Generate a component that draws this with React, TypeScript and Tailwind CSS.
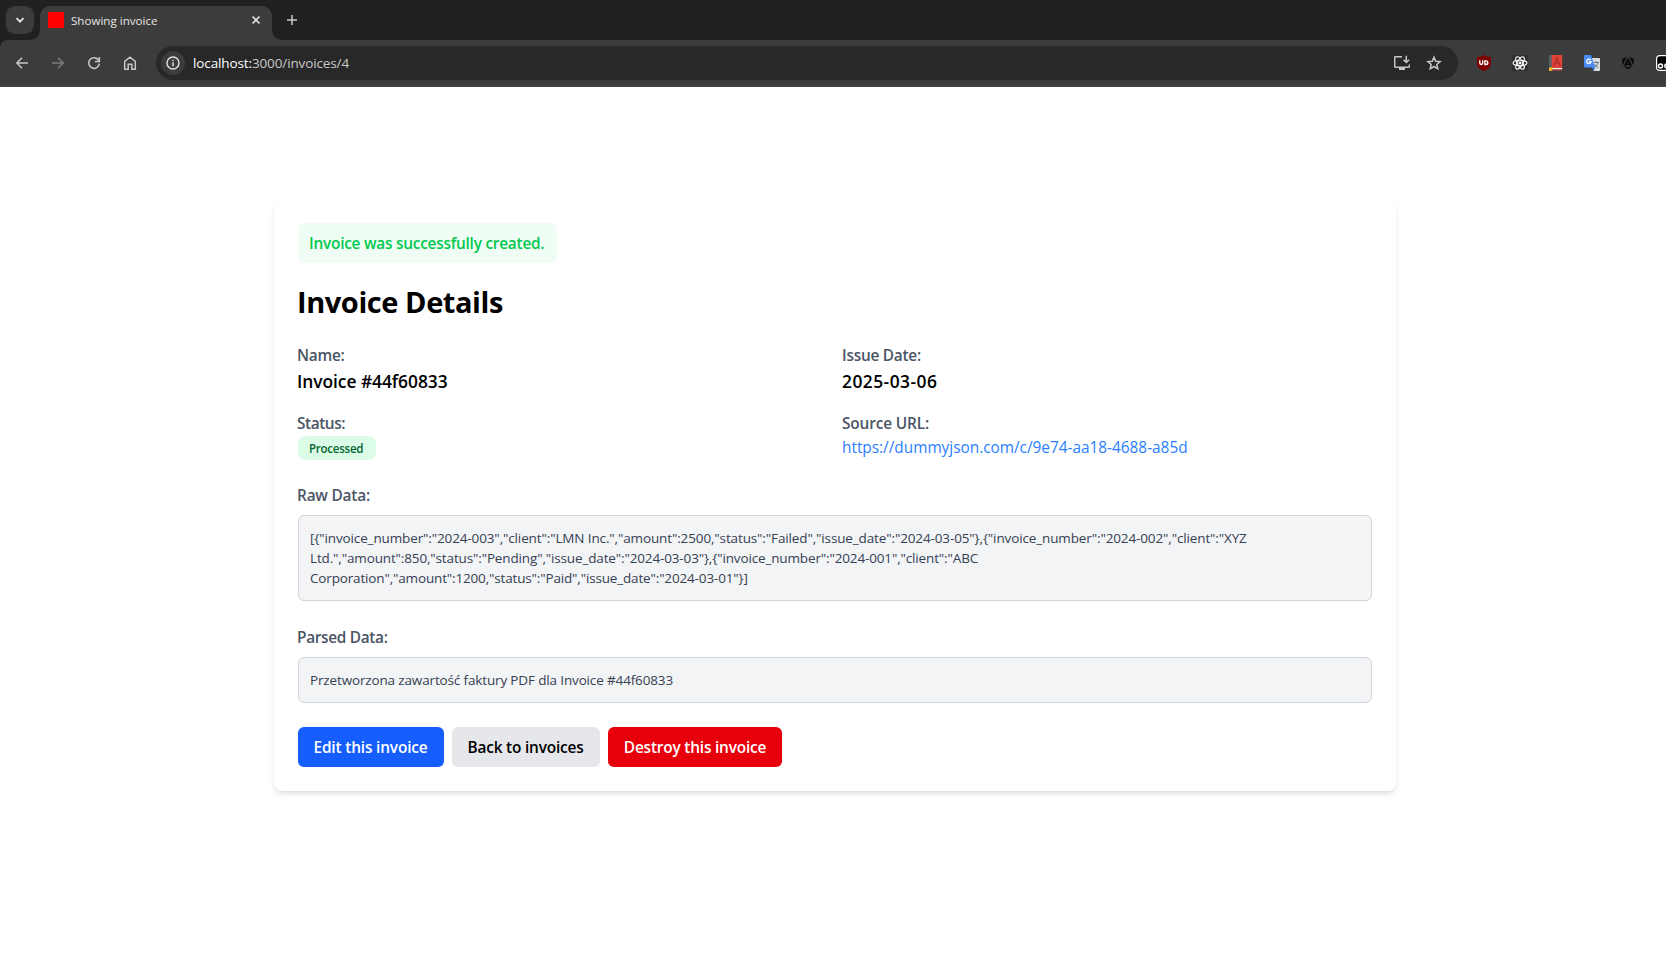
import type { ReactNode } from "react";

const icon = {
  width: 16,
  height: 16,
  viewBox: "0 0 16 16",
  fill: "none",
  className: "block shrink-0",
};

function TabStrip() {
  return (
    <div className="flex h-10 items-end bg-[#1f2120] text-[#e6e6e6]">
      <button className="mb-1.5 ml-1.5 flex size-7 items-center justify-center rounded-[9px] bg-[#3c3c3c]">
        <svg {...icon}>
          <path d="M4.500 6.200 8 9.700l3.500-3.500" stroke="#e3e3e3" strokeWidth="1.900" />
        </svg>
      </button>
      <div className="relative ml-1.5 flex h-[34px] w-[232px] items-center rounded-t-[10px] bg-[#3c3c3c] px-2 pb-1.5">
        <svg className="absolute bottom-0 -left-2.5" width="10" height="10" viewBox="0 0 10 10">
          <path d="M10 0v10H0A10 10 0 0 0 10 0Z" fill="#3c3c3c" />
        </svg>
        <svg className="absolute -right-2.5 bottom-0" width="10" height="10" viewBox="0 0 10 10">
          <path d="M0 0v10h10A10 10 0 0 1 0 0Z" fill="#3c3c3c" />
        </svg>
        <span className="size-4 bg-[#ff0000]" />
        <span className="ml-[7px] flex-1 pt-0.5 text-[11.6px] leading-4">Showing invoice</span>
        <svg {...icon}>
          <path d="m4.500 4.500 7 7m0-7-7 7" stroke="#e3e3e3" strokeWidth="1.600" />
        </svg>
      </div>
      <svg {...icon} className="mb-3 ml-3 block">
        <path d="M8 3v10M3 8h10" stroke="#c7c7c7" strokeWidth="1.500" />
      </svg>
    </div>
  );
}

function InfoIcon() {
  return (
    <span className="flex size-6 items-center justify-center rounded-full bg-[#3c3c3c]">
      <svg {...icon}>
        <circle cx="8" cy="8" r="6" stroke="#e3e3e3" strokeWidth="1.400" />
        <path d="M8 7.200v4M8 4.700v1.400" stroke="#e3e3e3" strokeWidth="1.500" />
      </svg>
    </span>
  );
}

function Extensions() {
  return (
    <div className="ml-[18px] flex w-[190px] items-center gap-5 overflow-hidden">
      <svg {...icon}>
        <path d="M8 0c2 1.500 4.300 2 7 2v6c0 4-3 6.500-7 8-4-1.500-7-4-7-8V2c2.700 0 5-.5 7-2Z" fill="#800000" />
        <path d="M3.800 5.200v2.900a1.400 1.400 0 0 0 2.900 0V5.200" stroke="#fff" strokeWidth="1.400" />
        <path d="M8.900 5.900v3.600h1.100a1.800 1.800 0 0 0 0-3.600Z" stroke="#fff" strokeWidth="1.400" />
      </svg>
      <svg {...icon}>
        <path d="M0 0h16v16H0z" fill="#303030" />
        <g stroke="#fff" strokeWidth="1.100">
          <ellipse cx="8" cy="8" rx="6.900" ry="2.700" />
          <ellipse cx="8" cy="8" rx="6.900" ry="2.700" transform="rotate(60 8 8)" />
          <ellipse cx="8" cy="8" rx="6.900" ry="2.700" transform="rotate(120 8 8)" />
        </g>
        <circle cx="8" cy="8" r="1.400" fill="#fff" />
      </svg>
      <svg {...icon}>
        <path d="M1 0h3v14H1z" fill="#56636b" />
        <path d="M3.700 0h10.500v13H3.700z" fill="#e04237" />
        <path d="M3.500 13h10.700v1.500H3.500z" fill="#f0f0f0" />
        <path d="M3 14.500h11.200v1H3z" fill="#c9362d" />
        <path d="m5.700 11 3.200-8 3.200 8M6.900 8.300H11" stroke="#b0302a" strokeWidth="1.500" />
        <path d="M1 12.500h3.500V15l-1.700 1H1Z" fill="#f6b81a" />
      </svg>
      <svg {...icon}>
        <path d="M7 3h8a1 1 0 0 1 1 1v11a1 1 0 0 1-1 1H9.500Z" fill="#dcdcdc" />
        <path d="M9.500 7.500h5.500M12 6v1.500M14 7.500c-.5 2.500-2 4-3.500 5M10.500 9c.8 1.800 2 3 3.700 3.700" stroke="#607d8b" strokeWidth="1" />
        <path d="m7 12 4 .5L9.500 16Z" fill="#3564c4" />
        <path d="M1 0h6l4.200 12.500H1a1 1 0 0 1-1-1V1a1 1 0 0 1 1-1Z" fill="#4c8bf5" />
        <path d="M6.600 5A2.200 2.200 0 1 0 7 6.700H4.900" stroke="#fff" strokeWidth="1.300" />
      </svg>
      <svg {...icon} fill="#0a0a0a">
        <path d="m10 2 3.900 1.900-.4 6.600L9.500 2ZM6 2 2.100 3.900l.4 6.600L6.500 2ZM7 3.800h2l3.200 7.600H9.900l-.5-1.300H6.600l-.5 1.300H3.800Zm1 2.700L7.200 8.600h1.600ZM4.500 12h7L8 14.200Z" />
      </svg>
      <svg {...icon}>
        <rect x=".6" y=".6" width="18" height="14.800" rx="3" fill="#000" stroke="#fff" strokeWidth="1.200" />
        <circle cx="4.500" cy="11" r="2" stroke="#fff" strokeWidth="1.500" />
        <circle cx="10.800" cy="11" r="2" stroke="#fff" strokeWidth="1.500" />
      </svg>
    </div>
  );
}

function Toolbar() {
  return (
    <div className="bg-[#1f2120]">
      <div className="flex h-[47px] items-center rounded-tl-lg border-b border-[#474747] bg-[#3c3c3c] pl-3.5">
        <nav className="flex items-center gap-5">
          <svg {...icon}>
            <path d="M14 8H3M8 2.800 2.800 8 8 13.200" stroke="#c7c7c7" strokeWidth="1.500" />
          </svg>
          <svg {...icon}>
            <path d="M2 8h11M8 2.800 13.200 8 8 13.200" stroke="#7c7c7c" strokeWidth="1.500" />
          </svg>
          <svg {...icon}>
            <path d="M13.300 8.700A5.300 5.300 0 1 1 12 4.500l1.300 1.600" stroke="#c7c7c7" strokeWidth="1.600" />
            <path d="M13.300 2v4.500H8.900" stroke="#c7c7c7" strokeWidth="1.600" />
          </svg>
          <svg {...icon}>
            <path d="M2.700 14.200V6.300L8 2.200l5.300 4.100v7.900H9.800V9.300H6.200v4.900Z" stroke="#c7c7c7" strokeWidth="1.500" />
          </svg>
        </nav>
        <div className="ml-[18px] flex h-[34px] w-[1302px] items-center rounded-full bg-[#282828] pr-4 pl-[5px]">
          <InfoIcon />
          <span className="ml-2 flex-1 text-[13.5px] leading-5 tracking-[-0.12px] text-[#c9c9c9]">
            <span className="text-white">localhost:</span>3000/invoices/4
          </span>
          <div className="flex items-center gap-4">
            <svg {...icon}>
              <path d="M8 1.700H1.500a.8.8 0 0 0-.8.8v9a.8.8 0 0 0 .8.8h13a.8.8 0 0 0 .8-.8V9.500" stroke="#c7c7c7" strokeWidth="1.500" />
              <path d="M5 13h6v2H5z" fill="#c7c7c7" />
              <path d="M12.300.8v6.400M9.500 4.700l2.800 2.800 2.800-2.800" stroke="#c7c7c7" strokeWidth="1.500" />
            </svg>
            <svg {...icon}>
              <path d="m8 2.200 1.700 4 4.400.4-3.300 2.900 1 4.300L8 11.500l-3.800 2.300 1-4.300-3.300-2.900 4.400-.4Z" stroke="#c7c7c7" strokeWidth="1.500" />
            </svg>
          </div>
        </div>
        <Extensions />
      </div>
    </div>
  );
}

function Label({ className, children }: { className: string; children: ReactNode }) {
  return <p className={`-ml-px pt-px text-[15.4px] leading-[23px] font-semibold text-gray-600 ${className}`}>{children}</p>;
}

function DataBox({ children }: { children: ReactNode }) {
  return (
    <div className="mt-2 rounded-md border border-gray-300 bg-gray-100 py-3 pr-3 pl-[11px] text-[13.5px] leading-5 whitespace-nowrap text-gray-700">
      {children}
    </div>
  );
}

function InvoiceCard() {
  return (
    <main className="ml-[274px] h-[592px] w-[1122px] rounded-lg bg-white p-6 shadow-md">
      <p className="h-10 w-[259px] rounded-md bg-green-50 pt-[9px] pl-[11px] text-[15.4px] leading-6 font-semibold tracking-[-0.24px] whitespace-nowrap text-[#00c950]">
        Invoice was successfully created.
      </p>
      <h1 className="mt-[21px] -ml-px text-[29px] leading-9 font-bold tracking-[-0.43px]">Invoice Details</h1>
      <div className="mt-[23px] grid grid-cols-2 gap-4">
        <div>
          <Label className="tracking-[-0.26px]">Name:</Label>
          <p className="-ml-px text-[17.4px] leading-7 font-semibold tracking-[-0.05px]">Invoice #44f60833</p>
        </div>
        <div>
          <Label className="tracking-[-0.25px]">Issue Date:</Label>
          <p className="-ml-px text-[17.4px] leading-7 font-semibold tracking-[0.46px]">2025-03-06</p>
        </div>
        <div>
          <Label className="tracking-[-0.44px]">Status:</Label>
          <p className="mt-px h-6 w-[78px] rounded-lg bg-green-100 pt-[5px] pl-[11px] text-[11.6px] leading-4 font-semibold tracking-[-0.28px] text-green-800">
            Processed
          </p>
        </div>
        <div>
          <Label className="tracking-[-0.15px]">Source URL:</Label>
          <a className="-ml-px block pt-px text-[15.4px] leading-6 tracking-[-0.02px] text-[#2b7fff]">
            https://dummyjson.com/c/9e74-aa18-4688-a85d
          </a>
        </div>
      </div>
      <section className="mt-[23px]">
        <Label className="tracking-[-0.2px]">Raw Data:</Label>
        <DataBox>
          <p className="tracking-[-0.125px]">{'[{"invoice_number":"2024-003","client":"LMN Inc.","amount":2500,"status":"Failed","issue_date":"2024-03-05"},{"invoice_number":"2024-002","client":"XYZ'}</p>
          <p className="tracking-[-0.14px]">{'Ltd.","amount":850,"status":"Pending","issue_date":"2024-03-03"},{"invoice_number":"2024-001","client":"ABC'}</p>
          <p className="tracking-[-0.155px]">{'Corporation","amount":1200,"status":"Paid","issue_date":"2024-03-01"}]'}</p>
        </DataBox>
      </section>
      <section className="mt-6">
        <Label className="tracking-[-0.32px]">Parsed Data:</Label>
        <DataBox>
          <p className="tracking-[-0.145px]">Przetworzona zawartość faktury PDF dla Invoice #44f60833</p>
        </DataBox>
      </section>
      <div className="mt-6 flex gap-2 text-[15.4px] leading-6 font-semibold whitespace-nowrap">
        <button className="h-10 w-[146px] rounded-md bg-[#155dfc] pt-0.5 pr-px tracking-[-0.16px] text-white">Edit this invoice</button>
        <button className="h-10 w-[148px] rounded-md bg-gray-200 pt-0.5 pr-px tracking-[-0.19px]">Back to invoices</button>
        <button className="h-10 w-[174px] rounded-md bg-[#e7000b] pt-0.5 tracking-[-0.19px] text-white">Destroy this invoice</button>
      </div>
    </main>
  );
}

export default function App() {
  return (
    <div className="h-[956px] w-[1666px] overflow-hidden bg-white font-['Open_Sans',sans-serif] text-black">
      <TabStrip />
      <Toolbar />
      <div className="pt-28">
        <InvoiceCard />
      </div>
    </div>
  );
}
